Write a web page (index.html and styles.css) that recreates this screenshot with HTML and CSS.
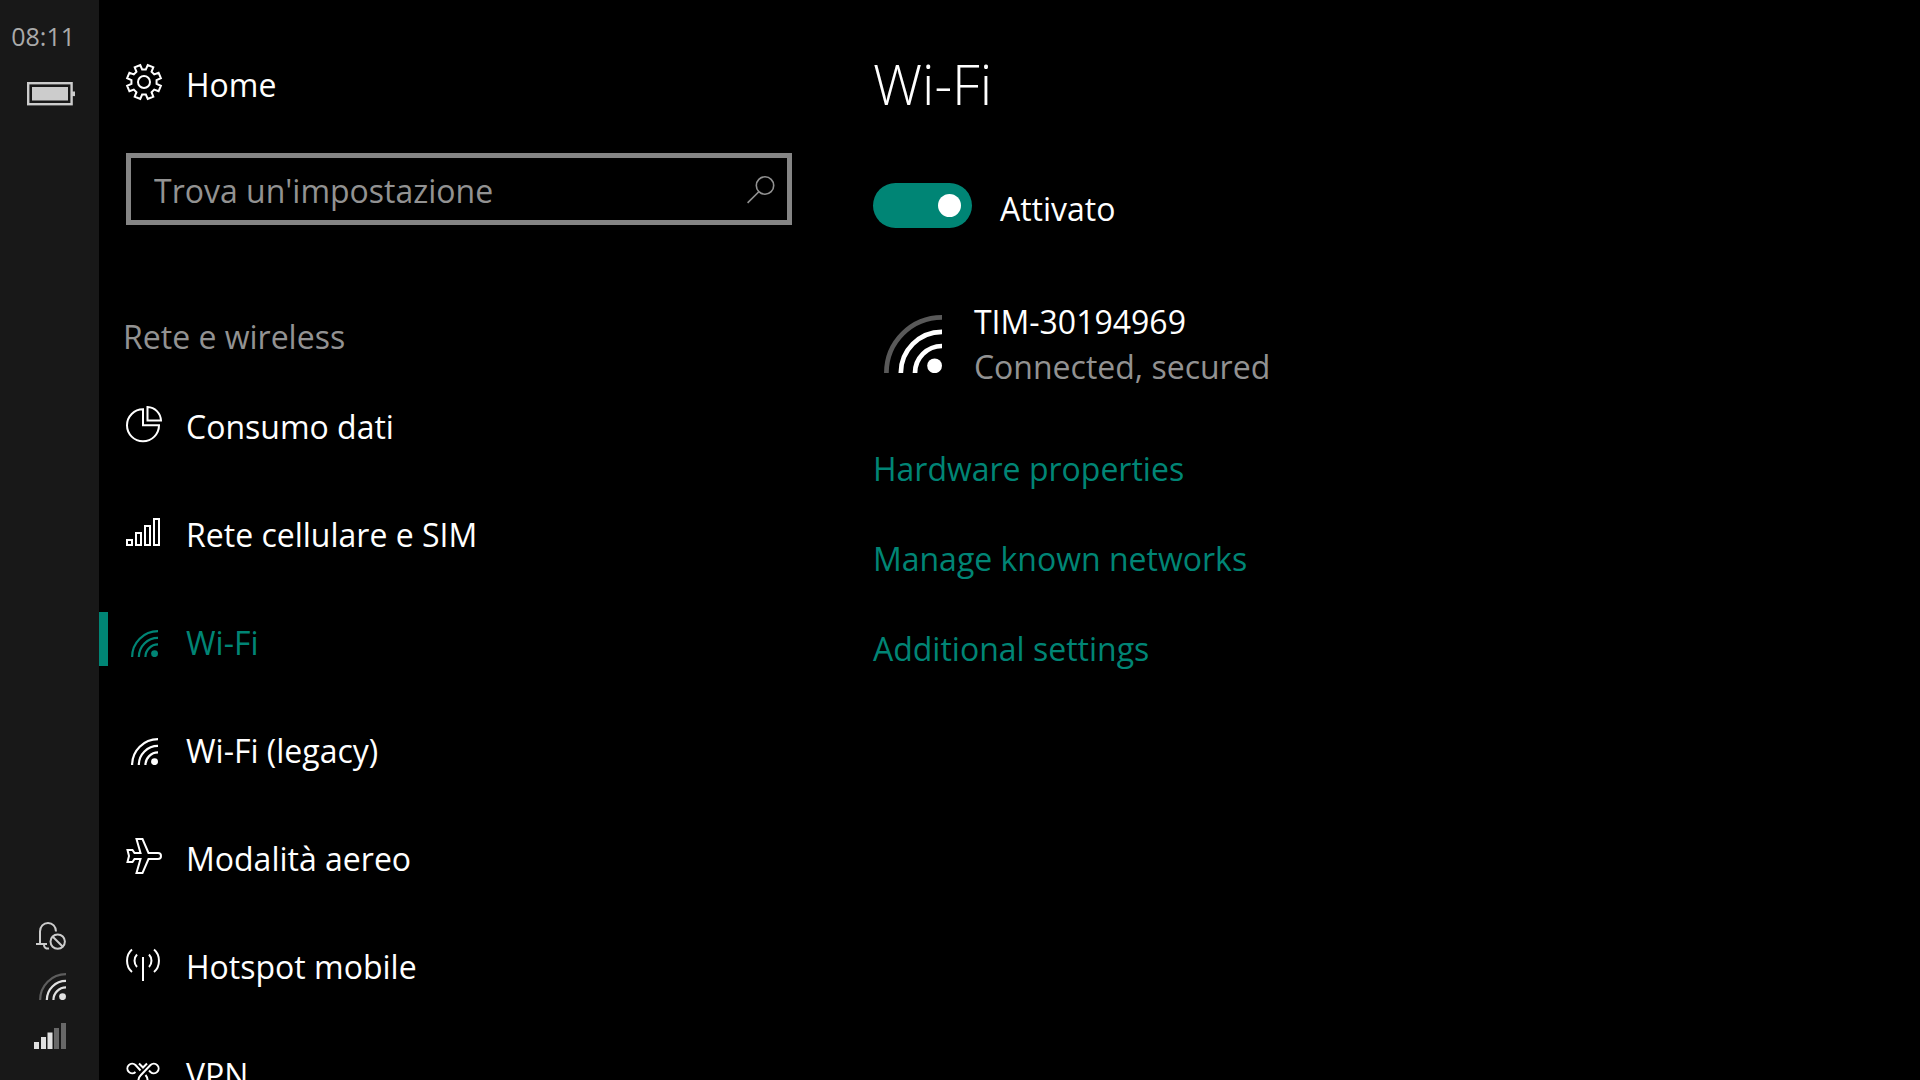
FILE: index.html
```html
<!DOCTYPE html>
<html lang="it">
<head>
  <meta charset="UTF-8">
  <meta name="viewport" content="width=device-width, initial-scale=1.0">
  <title>Wi-Fi</title>
  <link rel="stylesheet" href="styles.css">
</head>
<body>

  <!-- Shared wifi glyph -->
  <svg class="defs" aria-hidden="true">
    <symbol id="wifi" viewBox="0 0 58 58">
      <g fill="none" stroke="currentColor" stroke-width="4.7">
        <path class="wifi-outer" d="M2.4 58A55.6 55.6 0 0 1 58 2.4"/>
        <path d="M16.8 58A41.2 41.2 0 0 1 58 16.8"/>
        <path d="M31 58A27 27 0 0 1 58 31"/>
      </g>
      <circle cx="50.6" cy="50.8" r="7.4" fill="currentColor" stroke="none"/>
    </symbol>
  </svg>

  <div class="screen">
    <aside class="status">
      <div class="status-top">
        <time class="clock">08:11</time>
        <svg class="battery" viewBox="0 0 48 24">
          <rect x="1.2" y="1.2" width="43.4" height="21" fill="none" stroke="currentColor" stroke-width="2.4"/>
          <rect x="5" y="5" width="36" height="13.5" fill="currentColor"/>
          <rect x="45" y="9.5" width="3" height="4.6" fill="currentColor"/>
        </svg>
      </div>
      <div class="status-bottom">
        <svg class="bell" viewBox="0 0 30 28" fill="none" stroke="currentColor" stroke-width="2">
          <path d="M0 22H11M4 22V9.500C4 4.500 7.500 1 12 1S20 4.500 20 9.500M8 23C8 25.500 10 27 13 26.500"/>
          <circle cx="21.700" cy="19.600" r="7.200"/>
          <path d="M16.800 14.700L26.600 24.500"/>
        </svg>
        <svg class="status-wifi weak"><use href="#wifi"/></svg>
        <svg class="bars" viewBox="0 0 32 26" fill="currentColor">
          <rect x="0" y="19" width="5" height="7"/>
          <rect x="7" y="14" width="5" height="12"/>
          <rect x="13.500" y="9.500" width="5" height="16.500"/>
          <rect class="off" x="20" y="5" width="5" height="21"/>
          <rect class="off" x="27" y="0" width="5" height="26"/>
        </svg>
      </div>
    </aside>

    <nav class="menu">
      <a class="item home" href="#home">
        <svg class="icon" viewBox="-18 -18 36 36">
          <path d="M1.880-12.560L3.740-16.890 9.300-14.590 7.550-10.210 10.210-7.550 14.590-9.300 16.890-3.740 12.560-1.880V1.880L16.890 3.740 14.590 9.300 10.210 7.550 7.550 10.210 9.300 14.590 3.740 16.890 1.880 12.560H-1.880L-3.740 16.890-9.300 14.590-7.550 10.210-10.210 7.550-14.590 9.300-16.890 3.740-12.560 1.880V-1.880L-16.890-3.740-14.590-9.300-10.210-7.550-7.550-10.210-9.300-14.590-3.740-16.890-1.880-12.560Z"/>
          <circle r="6"/>
        </svg>
        <span>Home</span>
      </a>

      <form class="search" role="search">
        <input type="text" placeholder="Trova un'impostazione" aria-label="Trova un'impostazione">
        <button type="button" aria-label="Cerca">
          <svg viewBox="0 0 28 28" fill="none" stroke="currentColor" stroke-width="1.600">
            <circle cx="18" cy="9.500" r="8.700"/>
            <path d="M11.800 15.700L.6 26.900"/>
          </svg>
        </button>
      </form>

      <h2>Rete e wireless</h2>

      <ul class="list">
        <li><a class="item" href="#dati">
          <svg class="icon" viewBox="0 -1 36 36">
            <path d="M17 3.300V19.300H33A16 16 0 1 1 17 3.300Z"/>
            <path d="M21.500 1V14.600H35C34.600 7 29 1.400 21.500 1Z"/>
          </svg>
          <span>Consumo dati</span>
        </a></li>
        <li><a class="item" href="#sim">
          <svg class="icon" viewBox="0 0 36 36">
            <path d="M1 27H6V32H1ZM10 20H15V32H10ZM19 13H24V32H19ZM28 6H33V32H28Z"/>
          </svg>
          <span>Rete cellulare e SIM</span>
        </a></li>
        <li><a class="item active" href="#wifi-page">
          <svg class="icon wifi-icon"><use href="#wifi"/></svg>
          <span>Wi-Fi</span>
        </a></li>
        <li><a class="item" href="#legacy">
          <svg class="icon wifi-icon"><use href="#wifi"/></svg>
          <span>Wi-Fi (legacy)</span>
        </a></li>
        <li><a class="item" href="#aereo">
          <svg class="icon" viewBox="0 -1 36 36">
            <path d="M10.500 1H16.500L22.500 15H32A3 3 0 0 1 32 21H22.500L16.500 35H10.500L14.500 21H8.500L6.500 24H1.500L3 18 1.500 12H6.500L8.500 15H14.500Z"/>
          </svg>
          <span>Modalità aereo</span>
        </a></li>
        <li><a class="item" href="#hotspot">
          <svg class="icon" viewBox="0 0 36 36">
            <path d="M17 12V36M6 4.500C-.6 10-.6 21.500 6 27M28 4.500C34.600 10 34.600 21.500 28 27M11 9.500C7.700 13 7.700 18.500 11 22M23 9.500C26.300 13 26.300 18.500 23 22"/>
          </svg>
          <span>Hotspot mobile</span>
        </a></li>
        <li><a class="item" href="#vpn">
          <svg class="icon" viewBox="0 0 36 36">
            <path d="M9.500 19A4.800 4.800 0 1 1 9.500 12L14.500 17.500M19.500 22C23 26 22 34 17 34S11 26 14.500 22.500L24.500 12A4.800 4.800 0 1 1 24.500 19L23 17.500M13 10.500L17 14.500 21 10.500"/>
          </svg>
          <span>VPN</span>
        </a></li>
      </ul>
    </nav>

    <main class="panel">
      <h1>Wi-Fi</h1>

      <label class="toggle">
        <input type="checkbox" checked>
        <span>Attivato</span>
      </label>

      <section class="network weak">
        <svg class="network-icon"><use href="#wifi"/></svg>
        <div>
          <p>TIM-30194969</p>
          <p class="muted">Connected, secured</p>
        </div>
      </section>

      <div class="links">
        <a href="#hardware">Hardware properties</a>
        <a href="#networks">Manage known networks</a>
        <a href="#additional">Additional settings</a>
      </div>
    </main>
  </div>

</body>
</html>
```
FILE: styles.css
```css
* {
  box-sizing: border-box;
}

body {
  margin: 0;
  background: #000;
  color: #fff;
  font-family: 'Open Sans', 'Noto Sans', sans-serif;
  font-size: 32px;
  line-height: 45px;
}

a {
  color: inherit;
  text-decoration: none;
}

h1, h2, p, ul {
  margin: 0;
  padding: 0;
}

.defs {
  display: none;
}

.wifi-outer {
  opacity: var(--outer, 1);
}

.weak {
  --outer: 0.35;
}

.screen {
  display: grid;
  grid-template-columns: 99px 17fr 23fr;
  grid-template-rows: minmax(0, 1fr);
  height: 100vh;
  overflow: hidden;
}

/* Status bar */
.status {
  background: #181818;
  color: #ccc;
  display: flex;
  flex-direction: column;
  justify-content: space-between;
  padding: 16px 24px 31px 0;
}

.status-top,
.status-bottom {
  display: flex;
  flex-direction: column;
  align-items: flex-end;
}

.clock {
  font-size: 25px;
  line-height: 40px;
  color: #aaa;
}

.battery {
  width: 48px;
  height: 24px;
  margin-top: 26px;
}

.status-bottom {
  gap: 23px;
  padding-right: 9px;
}

.bell {
  width: 30px;
  height: 28px;
}

.status-wifi {
  width: 27px;
  height: 27px;
  color: #e0e0e0;
}

.bars {
  width: 32px;
  height: 26px;
  color: #e0e0e0;
}

.bars .off {
  opacity: 0.4;
}

/* Left menu */
.menu {
  min-width: 0;
  padding-top: 55px;
}

.item {
  display: flex;
  align-items: center;
  gap: 24px;
  height: 54px;
  padding-left: 27px;
}

.item span,
.toggle span {
  padding-top: 5px;
}

.list .item span {
  padding-top: 7px;
}

.item.active {
  color: #008575;
  border-left: 9px solid #008575;
  padding-left: 18px;
}

.icon {
  width: 36px;
  height: 36px;
  overflow: visible;
  fill: none;
  stroke: currentColor;
  stroke-width: 2;
}

.wifi-icon {
  padding: 9px 4px 0 5px;
}

.search {
  display: flex;
  align-items: center;
  height: 72px;
  margin: 44px 81px 0 27px;
  padding: 2px 12px 0 23px;
  border: 5px solid #858585;
}

.search input {
  flex: 1;
  min-width: 0;
  padding: 0;
  border: 0;
  outline: none;
  background: none;
  color: #fff;
  font: inherit;
}

.search input::placeholder {
  color: #929292;
  opacity: 1;
}

.search button {
  display: flex;
  padding: 0;
  border: 0;
  background: none;
  color: #929292;
}

.search svg {
  width: 28px;
  height: 28px;
}

.menu h2 {
  margin: 89px 0 37px 24px;
  font-size: 32px;
  font-weight: 400;
  color: #929292;
}

.list {
  display: grid;
  gap: 54px;
  list-style: none;
}

/* Right panel */
.panel {
  min-width: 0;
  padding-top: 47px;
}

.panel h1 {
  font-size: 55px;
  font-weight: 300;
  line-height: 74px;
}

.toggle {
  display: flex;
  align-items: center;
  gap: 28px;
  height: 45px;
  margin-top: 62px;
}

.toggle input {
  appearance: none;
  display: flex;
  align-items: center;
  justify-content: flex-end;
  width: 99px;
  height: 45px;
  margin: 0;
  padding: 0 11px;
  border-radius: 23px;
  background: #555;
}

.toggle input:checked {
  background: #008575;
}

.toggle input::before {
  content: '';
  width: 23px;
  height: 23px;
  border-radius: 50%;
  background: #fff;
}

.network {
  display: flex;
  align-items: center;
  gap: 32px;
  margin-top: 71px;
  padding-left: 11px;
}

.network-icon {
  width: 58px;
  height: 58px;
}

.muted {
  color: #929292;
}

.links {
  display: grid;
  justify-items: start;
  gap: 45px;
  margin-top: 57px;
  color: #008575;
}
```
